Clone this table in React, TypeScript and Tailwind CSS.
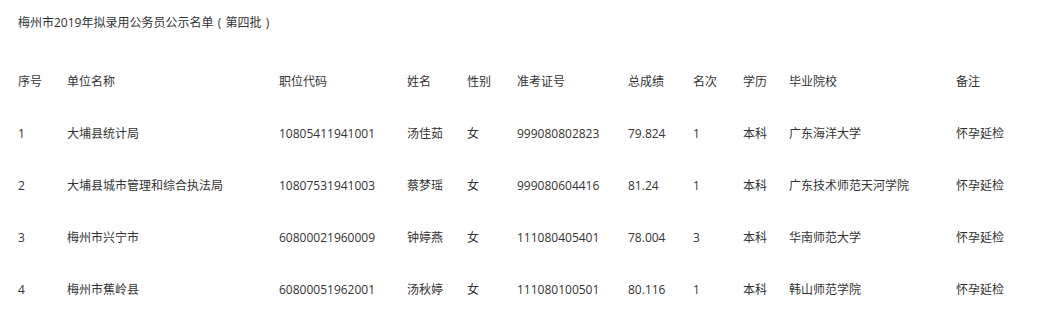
import React from "react";

const headers = ["序号", "单位名称", "职位代码", "姓名", "性别", "准考证号", "总成绩", "名次", "学历", "毕业院校", "备注"];

const rows = [
  ["1", "大埔县统计局", "10805411941001", "汤佳茹", "女", "999080802823", "79.824", "1", "本科", "广东海洋大学", "怀孕延检"],
  ["2", "大埔县城市管理和综合执法局", "10807531941003", "蔡梦瑶", "女", "999080604416", "81.24", "1", "本科", "广东技术师范天河学院", "怀孕延检"],
  ["3", "梅州市兴宁市", "60800021960009", "钟婷燕", "女", "111080405401", "78.004", "3", "本科", "华南师范大学", "怀孕延检"],
  ["4", "梅州市蕉岭县", "60800051962001", "汤秋婷", "女", "111080100501", "80.116", "1", "本科", "韩山师范学院", "怀孕延检"],
];

const cols = "grid grid-cols-[49px_212px_128px_60px_50px_111px_65px_50px_46px_167px_1fr]";

function App() {
  return (
    <div className="w-[1041px] h-[316px] bg-white pl-[18px] text-[12px] text-[#333] font-['Open_Sans','Noto_Sans_CJK_SC',sans-serif] leading-[16px] overflow-hidden">
      <p className="pt-[15px]">
        梅州市2019年拟录用公务员公示名单
        <span className="inline-block w-[12px] text-center">(</span>
        第四批
        <span className="inline-block w-[12px] text-center">)</span>
      </p>
      <div className={`${cols} mt-[43px] h-[52px]`}>
        {headers.map((h) => (
          <div key={h}>{h}</div>
        ))}
      </div>
      {rows.map((r) => (
        <div key={r[0]} className={`${cols} h-[52px]`}>
          {r.map((c, i) => (
            <div key={i} className="whitespace-nowrap">{c}</div>
          ))}
        </div>
      ))}
    </div>
  );
}

export default App;
